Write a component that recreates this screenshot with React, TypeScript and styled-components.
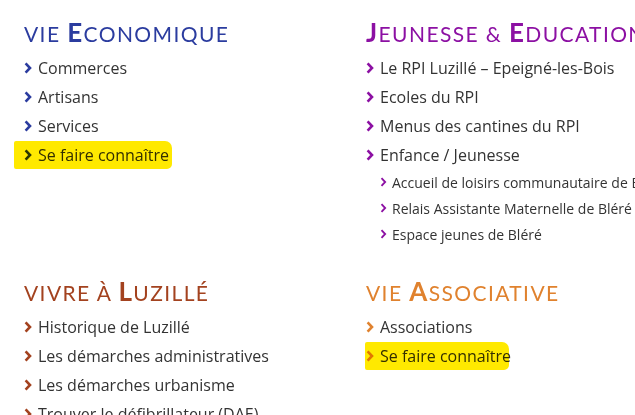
import React from "react";
import styled, { createGlobalStyle } from "styled-components";

const Global = createGlobalStyle`
  html, body { margin: 0; padding: 0; background: #fff; }
  body { font-family: "Open Sans", "Liberation Sans", sans-serif; color: #333; overflow: hidden; }
  ul { margin: 0; padding: 0; list-style: none; }
`;

const Page = styled.div`
  display: grid;
  grid-template-columns: 342px 342px;
  row-gap: 28px;
  padding: 16px 0 0 24px;
  width: 635px;
  height: 415px;
  box-sizing: border-box;
  overflow: hidden;
`;

const Section = styled.section``;

const Heading = styled.h2<{ $color: string }>`
  margin: 0 0 3px;
  font-family: "Lato", "Liberation Sans", sans-serif;
  font-weight: 400;
  font-size: 21px;
  line-height: 32px;
  letter-spacing: 1.4px;
  color: ${(p) => p.$color};
  white-space: nowrap;
  text-transform: uppercase;
`;

const Big = styled.span`
  font-size: 26px;
  font-weight: 700;
`;

const Item = styled.li<{ $sub?: boolean }>`
  position: relative;
  display: flex;
  align-items: center;
  gap: ${(p) => (p.$sub ? "5px" : "6px")};
  height: ${(p) => (p.$sub ? "26px" : "29px")};
  padding-left: ${(p) => (p.$sub ? "14px" : "0")};
  font-size: ${(p) => (p.$sub ? "14px" : "16px")};
  white-space: nowrap;
`;

const Marker = styled.span<{ $left: number; $width: number }>`
  position: absolute;
  left: ${(p) => p.$left}px;
  width: ${(p) => p.$width}px;
  top: 1px;
  bottom: 0px;
  background: #ffe900;
  border-radius: 2px 7px 5px 2px;
  mix-blend-mode: multiply;
  pointer-events: none;
`;

const Chevron = ({ color, small }: { color: string; small?: boolean }) => {
  const w = small ? 7 : 8;
  const h = small ? 10 : 12;
  return (
    <svg width={w} height={h} viewBox="0 0 8 12" style={{ flex: "none" }}>
      <path d="M1.6 1.4 L6 6 L1.6 10.6" fill="none" stroke={color} strokeWidth={small ? 2.2 : 2.6} strokeLinecap="butt" strokeLinejoin="miter" />
    </svg>
  );
};

type Entry = { label: string; sub?: boolean; mark?: { left: number; width: number } };

const sections: { first: string; rest: string; pre?: string; color: string; items: Entry[] }[] = [
  {
    pre: "Vie ",
    first: "E",
    rest: "conomique",
    color: "#2b3c9f",
    items: [
      { label: "Commerces" },
      { label: "Artisans" },
      { label: "Services" },
      { label: "Se faire connaître", mark: { left: -10, width: 158 } },
    ],
  },
  {
    first: "J",
    rest: "eunesse & ",
    color: "#8c10a3",
    items: [
      { label: "Le RPI Luzillé – Epeigné-les-Bois" },
      { label: "Ecoles du RPI" },
      { label: "Menus des cantines du RPI" },
      { label: "Enfance / Jeunesse" },
      { label: "Accueil de loisirs communautaire de Bléré", sub: true },
      { label: "Relais Assistante Maternelle de Bléré", sub: true },
      { label: "Espace jeunes de Bléré", sub: true },
    ],
  },
  {
    pre: "Vivre à ",
    first: "L",
    rest: "uzillé",
    color: "#a3421f",
    items: [
      { label: "Historique de Luzillé" },
      { label: "Les démarches administratives" },
      { label: "Les démarches urbanisme" },
      { label: "Trouver le défibrillateur (DAE)" },
    ],
  },
  {
    pre: "Vie ",
    first: "A",
    rest: "ssociative",
    color: "#e0822e",
    items: [
      { label: "Associations" },
      { label: "Se faire connaître", mark: { left: -1, width: 144 } },
    ],
  },
];

export default function App() {
  return (
    <>
      <Global />
      <Page>
        {sections.map((s, i) => (
          <Section key={i}>
            <Heading $color={s.color}>
              {s.pre}
              <Big>{s.first}</Big>
              {s.rest}
              {i === 1 && (
                <>
                  <Big>E</Big>ducation
                </>
              )}
            </Heading>
            <ul>
              {s.items.map((it, j) => (
                <Item key={j} $sub={it.sub}>
                  <Chevron color={s.color} small={it.sub} />
                  <span>{it.label}</span>
                  {it.mark && <Marker $left={it.mark.left} $width={it.mark.width} />}
                </Item>
              ))}
            </ul>
          </Section>
        ))}
      </Page>
    </>
  );
}
